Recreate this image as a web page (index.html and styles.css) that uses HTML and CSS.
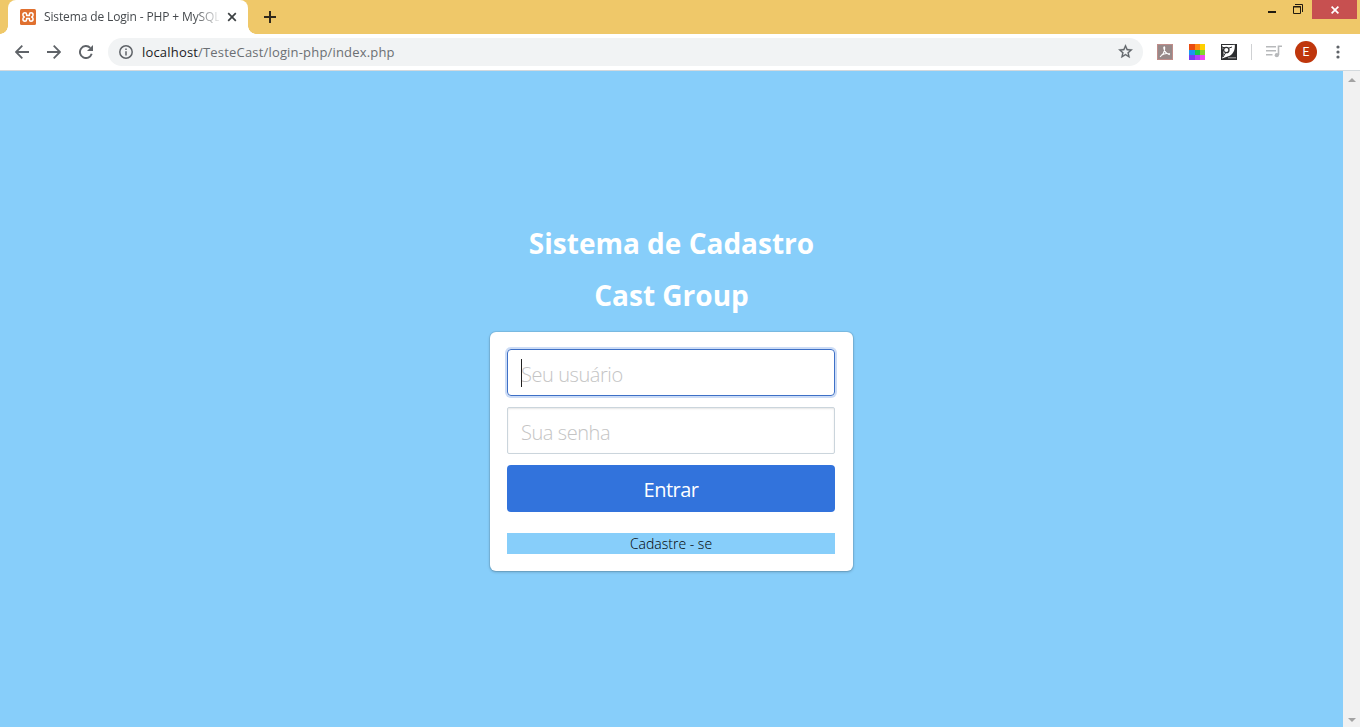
FILE: index.html
```html
<!DOCTYPE html>
<html lang="pt-BR">
<head>
<meta charset="utf-8">
<title>Sistema de Login - PHP + MySQL</title>
<link rel="stylesheet" href="styles.css">
</head>
<body>
<div class="browser">
  <header class="titlebar">
    <div class="tab">
      <svg class="favicon" viewBox="0 0 16 16"><rect width="16" height="16" rx="1.500" fill="#e0702f"/><path d="M5 3.800Q2.900 3.800 2.900 5.900 2.900 7.300 4.300 8 2.900 8.700 2.900 10.100 2.900 12.200 5 12.200 6.500 12.200 6.600 10.600V9.400H9.400V10.600Q9.500 12.200 11 12.200 13.100 12.200 13.100 10.100 13.100 8.700 11.700 8 13.100 7.300 13.100 5.900 13.100 3.800 11 3.800 9.500 3.800 9.400 5.400V6.600H6.600V5.400Q6.500 3.800 5 3.800Z" fill="none" stroke="#fff" stroke-width="1.500" stroke-linejoin="round"/></svg>
      <span class="tab-title">Sistema de Login - PHP + MySQL</span>
      <svg class="tab-close" viewBox="0 0 10 10"><path d="M1.200 1.200l7.600 7.600M8.800 1.200L1.200 8.800" stroke="#3c4043" stroke-width="1.700"/></svg>
    </div>
    <svg class="new-tab" viewBox="0 0 12 12"><path d="M6 0v12M0 6h12" stroke="#30291c" stroke-width="2"/></svg>
    <div class="window-controls">
      <svg class="minimize" viewBox="0 0 8 12"><path d="M0 8h8" stroke="#211b10" stroke-width="2"/></svg>
      <svg class="restore" viewBox="0 0 10 10"><path d="M2 .5h7.500V8M.5 2.500h7v7h-7z" fill="none" stroke="#211b10"/><path d="M0 3h8" stroke="#211b10"/></svg>
      <div class="close"><svg viewBox="0 0 8 8"><path d="M.6.6l6.800 6.800M7.400.6L.6 7.400" stroke="#fff" stroke-width="1.700"/></svg></div>
    </div>
  </header>
  <nav class="toolbar">
    <svg class="nav-icon back" viewBox="0 0 14 14"><path d="M14 7H1.300M7.300.7L1 7l6.300 6.300" fill="none" stroke="#5f6368" stroke-width="1.800"/></svg>
    <svg class="nav-icon forward" viewBox="0 0 14 14"><path d="M0 7h12.700M6.700.7L13 7l-6.300 6.300" fill="none" stroke="#5f6368" stroke-width="1.800"/></svg>
    <svg class="nav-icon reload" viewBox="0 0 14 14"><path d="M12.700 8.800A6 6 0 1 1 11.300 2.900" fill="none" stroke="#5f6368" stroke-width="1.900"/><path d="M14 0v6H8z" fill="#5f6368"/></svg>
    <div class="address">
      <svg class="info" viewBox="0 0 14 14"><circle cx="7" cy="7" r="6.200" fill="none" stroke="#5f6368" stroke-width="1.500"/><path d="M7 6.200v4.300M7 3.500V5" stroke="#5f6368" stroke-width="1.500"/></svg>
      <span class="url"><b>localhost</b>/TesteCast/login-php/index.php</span>
      <svg class="star" viewBox="0 0 24 24"><path d="M22 9.240l-7.190-.62L12 2 9.190 8.630 2 9.240l5.460 4.730L5.820 21 12 17.270 18.180 21l-1.630-7.030L22 9.240zM12 15.400l-3.760 2.270 1-4.280-3.320-2.880 4.380-.38L12 6.100l1.710 4.040 4.380.38-3.320 2.880 1 4.280L12 15.400z" fill="#5f6368" stroke="#5f6368" stroke-width=".4"/></svg>
    </div>
    <div class="extensions">
      <svg viewBox="0 0 16 16"><rect x=".5" y=".5" width="15" height="15" fill="#988989" stroke="#bf8c89"/><path d="M3 12.800C5.800 11 7.800 7 7.700 3.600 7.500 2.400 6.500 2.900 6.800 4.200 7.300 7.100 9.900 10 12.800 10.700M4.300 11.200C6.500 9.700 10 9.100 13 9.900" fill="none" stroke="#fff" stroke-width="1.100"/></svg>
      <svg viewBox="0 0 16 16" shape-rendering="crispEdges"><path d="M0 0h6v6H0z" fill="#e94b10"/><path d="M6 0h5v6H6z" fill="#ff8a10"/><path d="M11 0h5v6h-5z" fill="#ffd000"/><path d="M0 6h6v5H0z" fill="#1996f2"/><path d="M6 6h5v5H6z" fill="#18c84b"/><path d="M11 6h5v5h-5z" fill="#83d52c"/><path d="M0 11h6v5H0z" fill="#783cf4"/><path d="M6 11h5v5H6z" fill="#b044f8"/><path d="M11 11h5v5h-5z" fill="#ef46f1"/></svg>
      <svg viewBox="0 0 16 16"><path d="M0 0h16v16H0z" fill="#2c2d2f"/><path d="M1 1h10l2.800-.3c.5 5.500-2 10.300-6.500 11.500L1 14.500l1.800-4z" fill="#fff"/><circle cx="5.300" cy="6" r="2.700" fill="#fff" stroke="#2c2d2f" stroke-width="1.300"/><path d="M1 3l3 1M8 4l3-1M4.500 9L2 13" stroke="#2c2d2f"/><path d="M7 13.800h8" stroke="#aaa"/></svg>
    </div>
    <i class="separator"></i>
    <svg class="playlist" viewBox="0 0 16 13"><path d="M0 1.700h10M0 5.700h10M0 9.700h6.500M12.500 10V1.200H16" fill="none" stroke="#b7b9bb" stroke-width="1.600"/><circle cx="10.800" cy="10.200" r="2.100" fill="#b7b9bb"/></svg>
    <span class="avatar">E</span>
    <svg class="kebab" viewBox="0 0 4 14"><g fill="#5f6368"><circle cx="2" cy="2" r="1.600"/><circle cx="2" cy="7" r="1.600"/><circle cx="2" cy="12" r="1.600"/></g></svg>
  </nav>
  <div class="viewport">
    <main class="page">
      <h3 class="title">Sistema de Cadastro</h3>
      <h3 class="title">Cast Group</h3>
      <form class="box">
        <div class="field focused"><i class="caret"></i><span class="placeholder">Seu usuário</span></div>
        <div class="field"><span class="placeholder password">Sua senha</span></div>
        <button class="submit" type="button"><span>Entrar</span></button>
        <a class="register"><span>Cadastre - se</span></a>
      </form>
    </main>
    <aside class="scrollbar"><i class="up"></i><i class="down"></i></aside>
  </div>
</div>
</body>
</html>
```
FILE: styles.css
```css
* { box-sizing: border-box; }
body { margin: 0; overflow: hidden; font-family: "Open Sans", "Noto Sans", sans-serif; }
svg { display: block; flex: none; }
.browser { width: 1360px; height: 727px; display: flex; flex-direction: column; }
.titlebar { height: 34px; flex: none; display: flex; background: #efc869; }
.tab { position: relative; width: 240px; margin-left: 8px; height: 34px; background: #fff; border-radius: 8px 8px 0 0; display: flex; align-items: center; padding-left: 12px; }
.tab::before, .tab::after { content: ""; position: absolute; bottom: 0; width: 8px; height: 8px; }
.tab::before { left: -8px; background: radial-gradient(circle at 0 0, #efc869 7.5px, #fff 8px); }
.tab::after { right: -8px; background: radial-gradient(circle at 100% 0, #efc869 7.5px, #fff 8px); }
.favicon { width: 16px; height: 16px; }
.tab-title { width: 175px; margin-left: 8px; overflow: hidden; white-space: nowrap; font-size: 12px; letter-spacing: -.13px; line-height: 18px; color: #45494d; -webkit-mask-image: linear-gradient(90deg, #000 150px, transparent 178px); mask-image: linear-gradient(90deg, #000 150px, transparent 178px); }
.tab-close { width: 10px; height: 10px; margin-left: 8px; }
.new-tab { width: 12px; height: 12px; margin: 11px 0 0 16px; }
.window-controls { margin-left: auto; display: flex; align-items: flex-start; padding-right: 3px; }
.minimize { width: 8px; height: 12px; margin: 4px 17px 0 0; }
.restore { width: 10px; height: 10px; margin: 4px 9px 0 0; }
.close { width: 45px; height: 19px; background: #c75050; display: flex; align-items: center; justify-content: center; }
.close svg { width: 8px; height: 8px; }
.toolbar { height: 37px; flex: none; display: flex; align-items: center; padding: 0 19px 1px 15px; background: #fff; border-bottom: 1px solid #d3d9dd; }
.nav-icon { width: 14px; height: 14px; margin-right: 18px; }
.reload { margin-right: 15px; }
.address { width: 1035px; flex: none; height: 28px; border-radius: 14px; background: #f1f3f4; display: flex; align-items: center; padding: 0 9px 0 11px; }
.info { width: 14px; height: 14px; }
.url { margin: 0 auto 0 9px; font-size: 13px; line-height: 20px; letter-spacing: .18px; color: #6b6f73; }
.url b { font-weight: 400; color: #202124; }
.star { width: 17px; height: 17px; }
.extensions { display: flex; gap: 16px; margin-left: 14px; }
.extensions svg { width: 16px; height: 16px; }
.separator { width: 1px; height: 16px; margin-left: 14px; background: #cfd1d3; }
.playlist { width: 16px; height: 13px; margin-left: 14px; }
.avatar { width: 22px; height: 22px; flex: none; margin-left: 13px; border-radius: 50%; background: #bf360c; color: #fff; font: 12px/22px Roboto, sans-serif; text-align: center; }
.kebab { width: 4px; height: 14px; margin-left: 19px; }
.viewport { flex: 1; display: flex; min-height: 0; }
.page { flex: 1; background: #87cefa; display: flex; flex-direction: column; align-items: center; padding-top: 156px; }
.title { margin: 0 0 20px; font-size: 28px; line-height: 32px; font-weight: 700; color: #fff; white-space: nowrap; }
.box { width: 363px; height: 239px; margin-top: 1px; background: #fff; border-radius: 6px; padding: 17px 18px 17px 17px; box-shadow: 0 1px 3px rgba(10,10,10,.25), 0 0 0 1px rgba(10,10,10,.07); display: flex; flex-direction: column; }
.field { position: relative; height: 47px; flex: none; margin-bottom: 11px; border: 1px solid #cbd5dc; border-radius: 2px; box-shadow: inset 0 1px 2px rgba(10,10,10,.1); display: flex; align-items: center; padding: 4px 13px 0; }
.focused { border-color: #3e70c6; border-radius: 4px; box-shadow: 0 0 0 2px rgba(50,115,220,.25); }
.caret { position: absolute; left: 13px; top: 9px; width: 1px; height: 28px; background: #222; }
.placeholder { font-size: 20px; line-height: 30px; letter-spacing: -.43px; font-weight: 300; color: #c4c4c4; white-space: nowrap; }
.submit { height: 47px; flex: none; border: 0; border-radius: 4px; background: #3273dc; color: #fff; font: 20px/30px "Open Sans", sans-serif; letter-spacing: -.5px; padding: 3px 0 0; }
.register { margin-top: 21px; height: 21px; background: #87cefa; color: #000; text-align: center; font-size: 14px; line-height: 22px; font-weight: 300; }
.scrollbar { width: 17px; background: #f1f1f1; display: flex; flex-direction: column; justify-content: space-between; align-items: center; padding: 7px 0 5px; }
.up, .down { border: 4px solid transparent; }
.up { border-top: 0; border-bottom-color: #a3a3a3; }
.down { border-bottom: 0; border-top-color: #a3a3a3; }
```
